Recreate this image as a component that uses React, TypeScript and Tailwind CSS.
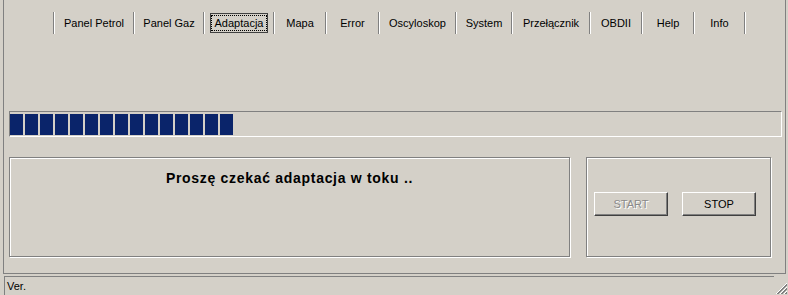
import React from "react";

const tabs = [
  { label: "Panel Petrol", w: "w-[78px]" },
  { label: "Panel Gaz", w: "w-[68px]" },
  { label: "Adaptacja", w: "w-[68px]", active: true },
  { label: "Mapa", w: "w-[50px]" },
  { label: "Error", w: "w-[51px]" },
  { label: "Oscyloskop", w: "w-[75px]" },
  { label: "System", w: "w-[54px]" },
  { label: "Przełącznik", w: "w-[76px]" },
  { label: "OBDII", w: "w-[50px]" },
  { label: "Help", w: "w-[50px]" },
  { label: "Info", w: "w-[49px]" },
];

function Separator() {
  return <div className="h-[22px] w-[2px] border-l border-l-[#808080] border-r border-r-white" />;
}

function Win98Button({ label, disabled }: { label: string; disabled?: boolean }) {
  return (
    <button
      className={
        "w-[74px] h-[24px] flex items-center justify-center text-[11px] border border-t-white border-l-white border-r-[#404040] border-b-[#404040] shadow-[inset_-1px_-1px_0_#808080] bg-[#d4d0c8] " +
        (disabled ? "text-[#8a8a8a] [text-shadow:1px_1px_0_#fff]" : "text-black")
      }
    >
      {label}
    </button>
  );
}

export default function App() {
  const blocks = Array.from({ length: 15 });

  return (
    <div className="w-[788px] h-[295px] bg-[#d4d0c8] flex flex-col font-['Liberation_Sans',Arial,sans-serif] text-black overflow-hidden">
      <div className="ml-[3px] mr-[2px] h-[274px] border-l border-r border-b border-[#808080] flex flex-col">
        {/* tab strip */}
        <div className="flex items-center pt-[12px] pl-[49px]">
          {tabs.map((t) => (
            <React.Fragment key={t.label}>
              <Separator />
              <div className={t.w + " h-[22px] flex items-center justify-center"}>
                {t.active ? (
                  <div className="h-[20px] px-[1px] flex items-center border border-[#404040] bg-[#d4d0c8]">
                    <span className="text-[11px] leading-[14px] px-[3px] outline outline-1 outline-dotted outline-black">
                      {t.label}
                    </span>
                  </div>
                ) : (
                  <span className="text-[11px]">{t.label}</span>
                )}
              </div>
            </React.Fragment>
          ))}
          <Separator />
        </div>

        {/* progress bar */}
        <div className="mt-[77px] ml-[5px] mr-[3px] h-[26px] border-t border-l border-t-[#808080] border-l-[#808080] border-b border-r border-b-white border-r-white flex items-center gap-[2px]">
          {blocks.map((_, i) => (
            <div key={i} className="w-[13px] h-[21px] bg-[#0a246a]" />
          ))}
        </div>

        {/* group boxes */}
        <div className="mt-[20px] ml-[5px] flex gap-[16px]">
          <div className="w-[561px] h-[100px] border border-[#808080] shadow-[inset_1px_1px_0_#fff,1px_1px_0_#fff] flex justify-center pt-[11px]">
            <span className="text-[14px] font-bold leading-[18px] tracking-[0.7px]">Proszę czekać adaptacja w toku ..</span>
          </div>
          <div className="w-[185px] h-[100px] border border-[#808080] shadow-[inset_1px_1px_0_#fff,1px_1px_0_#fff] flex items-start gap-[14px] pl-[7px] pt-[34px]">
            <Win98Button label="START" disabled />
            <Win98Button label="STOP" />
          </div>
        </div>
      </div>

      {/* status bar */}
      <div className="flex-1 flex items-stretch pt-[2px]">
        <div className="flex-1 ml-[4px] border-t border-l border-[#808080] border-b-0 flex items-center pl-[2px]">
          <span className="text-[11px]">Ver.</span>
        </div>
        <div className="w-[14px] flex items-end justify-end">
          <svg width="13" height="13" viewBox="0 0 13 13">
            <line x1="12" y1="1" x2="1" y2="12" stroke="#fff" />
            <line x1="12" y1="2" x2="2" y2="12" stroke="#808080" />
            <line x1="12" y1="3" x2="3" y2="12" stroke="#808080" />
            <line x1="12" y1="5" x2="5" y2="12" stroke="#fff" />
            <line x1="12" y1="6" x2="6" y2="12" stroke="#808080" />
            <line x1="12" y1="7" x2="7" y2="12" stroke="#808080" />
            <line x1="12" y1="9" x2="9" y2="12" stroke="#fff" />
            <line x1="12" y1="10" x2="10" y2="12" stroke="#808080" />
            <line x1="12" y1="11" x2="11" y2="12" stroke="#808080" />
          </svg>
        </div>
      </div>
    </div>
  );
}
